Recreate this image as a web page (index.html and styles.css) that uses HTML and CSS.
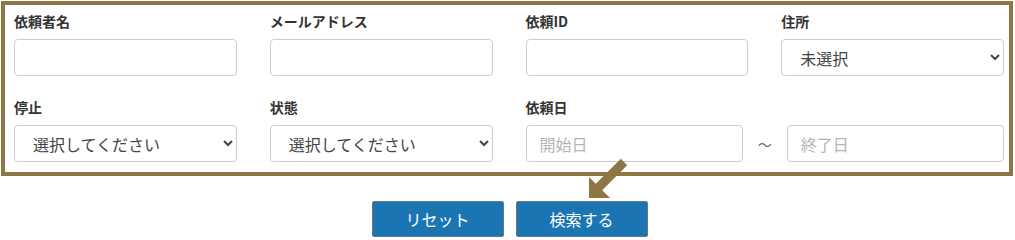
FILE: index.html
```html
<!DOCTYPE html>
<html lang="ja">
<head>
  <meta charset="UTF-8">
  <title>依頼検索</title>
  <link rel="stylesheet" href="styles.css">
</head>
<body>
  <div class="page">
    <div class="search-box">
      <div class="form-grid">
        <div class="form-group">
          <label for="requester">依頼者名</label>
          <input type="text" id="requester">
        </div>
        <div class="form-group">
          <label for="email">メールアドレス</label>
          <input type="text" id="email">
        </div>
        <div class="form-group">
          <label for="requestId">依頼ID</label>
          <input type="text" id="requestId">
        </div>
        <div class="form-group">
          <label for="address">住所</label>
          <select id="address">
            <option>未選択</option>
          </select>
        </div>
        <div class="form-group">
          <label for="stopped">停止</label>
          <select id="stopped">
            <option>選択してください</option>
          </select>
        </div>
        <div class="form-group">
          <label for="status">状態</label>
          <select id="status">
            <option>選択してください</option>
          </select>
        </div>
        <div class="form-group wide">
          <label for="dateFrom">依頼日</label>
          <div class="date-range">
            <input type="text" id="dateFrom" placeholder="開始日">
            <span class="tilde">～</span>
            <input type="text" id="dateTo" placeholder="終了日">
          </div>
        </div>
      </div>
    </div>

    <div class="buttons">
      <button type="button">リセット</button>
      <button type="button">検索する</button>
    </div>

    <!-- 注釈の矢印 -->
    <svg class="pointer" width="50" height="50" viewBox="0 0 50 50">
      <line x1="44" y1="7" x2="17" y2="34" stroke="#8e7645" stroke-width="9"/>
      <polygon points="9,22 9,43 30,43" fill="#8e7645"/>
    </svg>
  </div>
</body>
</html>
```

FILE: styles.css
```css
body {
  margin: 0;
  font-family: "Noto Sans CJK JP", "Noto Sans", sans-serif;
  color: #333;
  background: #fff;
}
.page {
  position: relative;
  width: 1015px;
  padding: 1px 2px 0 1px;
  box-sizing: border-box;
}
.search-box {
  border: 4px solid #8e7645;
  padding: 7px 5px 10px 9px;
}
.form-grid {
  display: grid;
  grid-template-columns: repeat(4, 1fr);
  column-gap: 33px;
  row-gap: 22px;
}
.form-group {
  display: flex;
  flex-direction: column;
}
.form-group.wide {
  grid-column: span 2;
}
label {
  font-size: 14px;
  font-weight: bold;
  line-height: 18px;
  height: 18px;
  margin-bottom: 9px;
  color: #333;
}
input[type="text"],
select {
  font-family: inherit;
  font-size: 16px;
  height: 37px;
  box-sizing: border-box;
  border: 1px solid #ccc;
  border-radius: 4px;
  background: #fff;
  color: #444;
}
input[type="text"] {
  padding: 0 13px;
}
input::placeholder {
  color: #b5b5b5;
}
select {
  padding: 0 12px 0 14px;
}
.date-range {
  display: flex;
  align-items: center;
}
.date-range input {
  flex: 1;
  min-width: 0;
}
.tilde {
  width: 44px;
  text-align: center;
  font-size: 14px;
  color: #667;
}
.buttons {
  display: flex;
  justify-content: center;
  gap: 12px;
  margin-top: 25px;
  padding-left: 5px;
}
button {
  font-family: inherit;
  font-size: 16px;
  width: 132px;
  height: 36px;
  color: #fff;
  background-color: #1b75b2;
  border: 1px solid #6b7680;
  border-radius: 2px;
  cursor: pointer;
}
.pointer {
  position: absolute;
  left: 580px;
  top: 155px;
}
```
